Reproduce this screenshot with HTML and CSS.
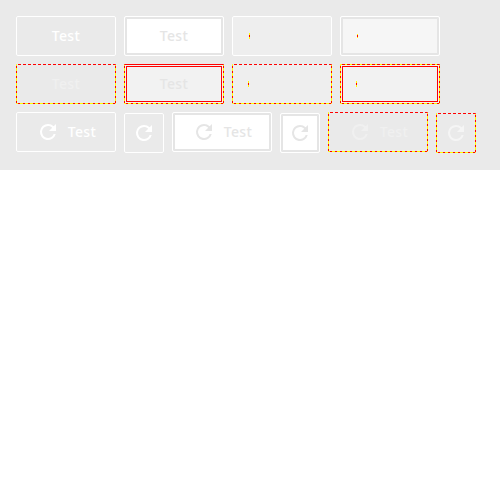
FILE: index.html
```html
<!DOCTYPE html>
<html lang="en">
<head>
<meta charset="utf-8">
<title>Buttons</title>
<link rel="stylesheet" href="styles.css">
</head>
<body>
<svg class="defs" aria-hidden="true"><symbol id="refresh" viewBox="0 0 24 24"><path fill="currentColor" d="M17.65 6.35A7.96 7.96 0 0 0 12 4a8 8 0 1 0 7.73 10h-2.08A6 6 0 1 1 12 6c1.66 0 3.14.69 4.22 1.78L13 11h7V4z"/></symbol></svg>
<main class="panel">
  <div class="row">
    <button class="btn">Test</button>
    <button class="btn primary">Test</button>
    <button class="btn pale mark"><i class="tick"></i></button>
    <button class="btn primary soft mark"><i class="tick small"></i></button>
  </div>
  <div class="row">
    <button class="btn disabled dashed">Test</button>
    <button class="btn disabled dashed framed solid-top">Test</button>
    <button class="btn disabled dashed pale mark"><i class="tick"></i></button>
    <button class="btn disabled dashed framed filled-top mark"><i class="tick"></i></button>
  </div>
  <div class="row">
    <button class="btn"><svg><use href="#refresh"/></svg><span>Test</span></button>
    <button class="btn icon"><svg><use href="#refresh"/></svg></button>
    <button class="btn primary"><svg><use href="#refresh"/></svg><span>Test</span></button>
    <button class="btn primary icon"><svg><use href="#refresh"/></svg></button>
    <button class="btn disabled dashed"><svg><use href="#refresh"/></svg><span>Test</span></button>
    <button class="btn disabled dashed icon bright"><svg><use href="#refresh"/></svg></button>
  </div>
</main>
</body>
</html>
```
FILE: styles.css
```css
* { box-sizing: border-box; }
body { margin: 0; background: #fff; font-family: "Noto Sans", sans-serif; }
.defs { display: none; }
.panel { height: 170px; padding: 16px; background: #eaeaea; }
.row { display: flex; gap: 8px; height: 40px; margin-bottom: 8px; }
.btn {
  display: flex; align-items: center; justify-content: center;
  width: 100px; height: 40px; padding: 0; flex: none;
  border: 1px solid #fff; border-radius: 2px;
  background: transparent; color: #fff;
  font: 500 14px/20px "Noto Sans", sans-serif;
  letter-spacing: 0.35px;
}
.btn svg { width: 24px; height: 24px; flex: none; }
.btn svg + span { margin-left: 8px; }
.primary { background: #fff; color: #e5e5e5; box-shadow: inset 0 0 0 2px #e5e5e5; }
.icon { width: 40px; margin-top: 1px; }
.pale { background-color: #eee; }
.soft { background: #f6f6f6; }
.mark { justify-content: flex-start; padding-left: 16px; }
.tick { width: 1px; height: 6px; background: linear-gradient(#ff0 2px, #f00 2px 4px, #ff0 4px); }
.tick.small { height: 4px; background: linear-gradient(#ff0 1px, #f00 1px 3px, #ff0 3px); }
.disabled { color: #f0f0f0; }
.bright { color: #f5f5f5; }
.dashed {
  --top: repeating-linear-gradient(90deg, transparent 0 2px, #f00 2px 5px);
  border: 0; border-radius: 1px;
  background-image:
    var(--top),
    repeating-linear-gradient(90deg, #ff0 0 2px, #f00 2px 4px, #ff0 4px 5px),
    repeating-linear-gradient(#ff0 0 2px, #f00 2px 4px, #ff0 4px 5px),
    repeating-linear-gradient(#ff0 0 2px, #f00 2px 4px, #ff0 4px 5px);
  background-size: 100% 1px, 100% 1px, 1px 100%, 1px 100%;
  background-position: top, bottom, left, right;
  background-repeat: no-repeat;
}
.framed { background-color: #f2f2f2; color: #e5e5e5; outline: 1px solid #f00; outline-offset: -3px; }
.solid-top { --top: linear-gradient(#f00, #f00); }
.filled-top { --top: repeating-linear-gradient(90deg, #ff0 0 2px, #f00 2px 5px); }
.dashed.mark { padding-left: 16px; }
```
